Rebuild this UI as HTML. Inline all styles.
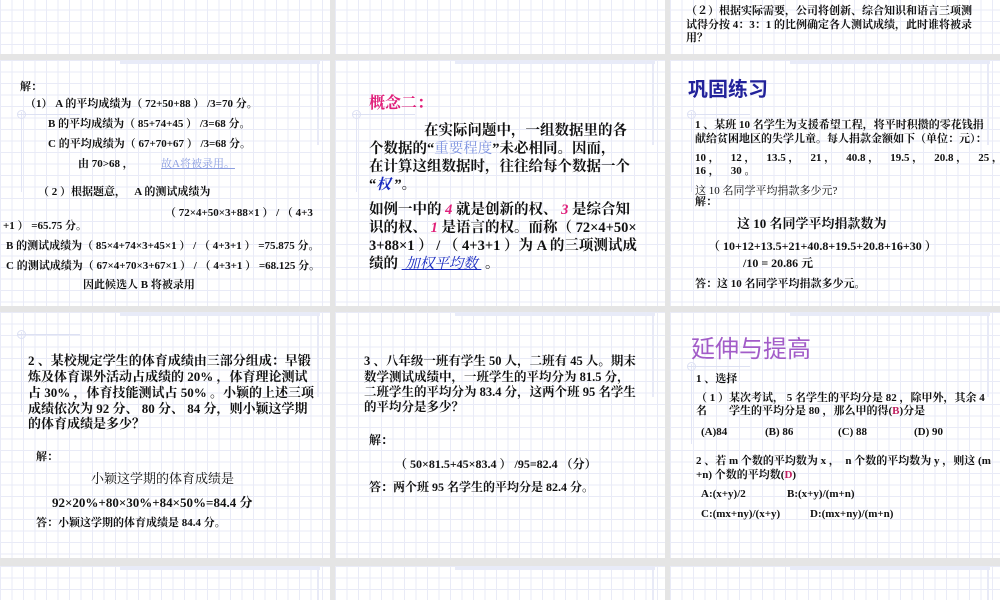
<!DOCTYPE html>
<html style="width:1000px;height:600px;overflow:hidden;background:#e5e5e5"><head><meta charset="utf-8"><style>
*{margin:0;padding:0;box-sizing:border-box}
body{width:1000px;height:600px;background:#e5e5e5;position:relative;overflow:hidden;font-family:"Liberation Serif","Noto Serif CJK SC",serif;font-weight:bold;color:#111}
.s{position:absolute;width:330px;height:246px;background-color:#fff;
background-image:linear-gradient(#e9ebf7 1px,transparent 1px),linear-gradient(90deg,#e9ebf7 1px,transparent 1px);background-size:11.5px 11.5px;overflow:hidden}
.s.b{height:34px}
.s.a{height:54px;background-position:0 -2px}
.s .band{position:absolute;left:120px;top:0;width:200px;height:4px;background:#e8ebf8}
.s .vl{position:absolute;left:317px;top:0;width:2px;height:85px;background:#e8eaf7}
.s.b .vl{height:34px}
.s .dl{position:absolute;left:21px;top:52px;width:1px;height:80px;background:#e3e6f6}
.s .hl{position:absolute;left:18px;top:54px;width:62px;height:1px;background:#dde1f3}
.s .c{position:absolute;left:17px;top:50px;width:9px;height:9px;border:1px solid #dce0f3;border-radius:50%}
.t{position:absolute;white-space:nowrap;font-size:11px;line-height:13px}
.m{font-size:14.5px;line-height:18px}
.n{font-size:13px;line-height:16px}
.k{font-size:12.5px;line-height:15px}
</style></head><body>
<div class="s a" style="left:0;top:0"></div>
<div class="s a" style="left:335px;top:0"></div>
<div class="s a" style="left:670px;top:0"></div>
<div class="s" style="left:0;top:60px"><div class="band"></div><div class="vl"></div><div class="dl"></div><div class="hl"></div><div class="c"></div></div>
<div class="s" style="left:335px;top:60px"><div class="band"></div><div class="vl"></div><div class="dl"></div><div class="hl"></div><div class="c"></div></div>
<div class="s" style="left:670px;top:60px"><div class="band"></div><div class="vl"></div><div class="dl"></div><div class="hl"></div><div class="c"></div></div>
<div class="s" style="left:0;top:312px"><div class="band"></div><div class="vl"></div><div class="dl" style="top:20px"></div><div class="hl" style="top:22px"></div><div class="c" style="top:18px"></div></div>
<div class="s" style="left:335px;top:312px"><div class="band"></div><div class="vl"></div></div>
<div class="s" style="left:670px;top:312px"><div class="band"></div><div class="vl"></div><div class="dl"></div><div class="hl"></div><div class="c"></div></div>
<div class="s b" style="left:0;top:566px"><div class="band"></div><div class="vl"></div></div>
<div class="s b" style="left:335px;top:566px"><div class="band"></div><div class="vl"></div></div>
<div class="s b" style="left:670px;top:566px"><div class="band"></div><div class="vl"></div></div>

<div class="t" style="left:686px;top:5px">（２）根据实际需要，公司将创新、综合知识和语言三项测</div>
<div class="t" style="left:686px;top:19px">试得分按 4：3：1 的比例确定各人测试成绩，此时谁将被录</div>
<div class="t" style="left:686px;top:32px">用？</div>

<div class="t" style="left:20px;top:81px">解：</div>
<div class="t" style="left:25px;top:98px">（1） A 的平均成绩为（ 72+50+88 ） /3=70 分。</div>
<div class="t" style="left:48px;top:118px">B 的平均成绩为（ 85+74+45 ） /3=68 分。</div>
<div class="t" style="left:48px;top:138px">C 的平均成绩为（ 67+70+67 ） /3=68 分。</div>
<div class="t" style="left:78px;top:158px">由 70>68 ，</div>
<div class="t" style="left:161px;top:158px;color:#8c9ee0;font-weight:normal;text-decoration:underline">故A将被录用。</div>
<div class="t" style="left:38px;top:186px">（ 2 ）根据题意，&nbsp;&nbsp; A 的测试成绩为</div>
<div class="t" style="left:165px;top:207px">（ 72×4+50×3+88×1 ） / （ 4+3</div>
<div class="t" style="left:3px;top:220px">+1 ） =65.75 分。</div>
<div class="t" style="left:6px;top:240px">B 的测试成绩为（ 85×4+74×3+45×1 ） / （ 4+3+1 ） =75.875 分。</div>
<div class="t" style="left:6px;top:260px">C 的测试成绩为（ 67×4+70×3+67×1 ） / （ 4+3+1 ） =68.125 分。</div>
<div class="t" style="left:83px;top:279px">因此候选人 B 将被录用</div>

<div class="t" style="left:369px;top:94px;font-size:16px;line-height:20px;color:#e0207a">概念二：</div>
<div class="t m" style="left:424px;top:122px">在实际问题中，一组数据里的各</div>
<div class="t m" style="left:369px;top:140px">个数据的“<span style="color:#7f94e0;font-weight:normal">重要程度</span>”未必相同。因而，</div>
<div class="t m" style="left:369px;top:158px">在计算这组数据时，往往给每个数据一个</div>
<div class="t m" style="left:369px;top:176px">“<i style="color:#1a2cc0">权</i> ”。</div>
<div class="t m" style="left:369px;top:201px">如例一中的 <i style="color:#e0207a">4</i> 就是创新的权、 <i style="color:#e0207a">3</i> 是综合知</div>
<div class="t m" style="left:369px;top:219px">识的权、 <i style="color:#e0207a">1</i> 是语言的权。而称（ 72×4+50×</div>
<div class="t m" style="left:369px;top:237px">3+88×1 ） / （ 4+3+1 ）为 A 的三项测试成</div>
<div class="t m" style="left:369px;top:255px">绩的 <i style="color:#1a2cc0;text-decoration:underline;font-weight:normal">&nbsp;加权平均数&nbsp;</i> 。</div>

<div class="t" style="left:688px;top:77px;font-size:20px;line-height:26px;color:#22229a;font-family:'Liberation Sans','Noto Sans CJK SC',sans-serif">巩固练习</div>
<div class="t" style="left:695px;top:119px">1 、某班 10 名学生为支援希望工程，将平时积攒的零花钱捐</div>
<div class="t" style="left:695px;top:133px">献给贫困地区的失学儿童。每人捐款金额如下（单位：元）：</div>
<div class="t" style="left:695px;top:152px">10 ，&nbsp;&nbsp;&nbsp; 12 ，&nbsp;&nbsp;&nbsp; 13.5 ，&nbsp;&nbsp;&nbsp; 21 ，&nbsp;&nbsp;&nbsp; 40.8 ，&nbsp;&nbsp;&nbsp; 19.5 ，&nbsp;&nbsp;&nbsp; 20.8 ，&nbsp;&nbsp;&nbsp; 25 ，</div>
<div class="t" style="left:695px;top:165px">16 ，&nbsp;&nbsp;&nbsp; 30 。</div>
<div class="t" style="left:695px;top:185px;font-weight:normal">这 10 名同学平均捐款多少元?</div>
<div class="t" style="left:695px;top:196px">解：</div>
<div class="t n" style="left:737px;top:216px">这 10 名同学平均捐款数为</div>
<div class="t" style="left:708px;top:240px;font-size:12px">（ 10+12+13.5+21+40.8+19.5+20.8+16+30 ）</div>
<div class="t" style="left:743px;top:257px;font-size:12px">/10 = 20.86 元</div>
<div class="t" style="left:695px;top:278px">答：这 10 名同学平均捐款多少元。</div>

<div class="t n" style="left:28px;top:353px">2 、某校规定学生的体育成绩由三部分组成：早锻</div>
<div class="t n" style="left:28px;top:369px">炼及体育课外活动占成绩的 20% ，体育理论测试</div>
<div class="t n" style="left:28px;top:385px">占 30% ，体育技能测试占 50% 。小颖的上述三项</div>
<div class="t n" style="left:28px;top:401px">成绩依次为 92 分、 80 分、 84 分，则小颖这学期</div>
<div class="t n" style="left:28px;top:416px">的体育成绩是多少？</div>
<div class="t" style="left:36px;top:451px">解：</div>
<div class="t n" style="left:91px;top:471px;font-weight:normal">小颖这学期的体育成绩是</div>
<div class="t n" style="left:52px;top:495px">92×20%+80×30%+84×50%=84.4 分</div>
<div class="t" style="left:36px;top:517px">答：小颖这学期的体育成绩是 84.4 分。</div>

<div class="t k" style="left:364px;top:354px">3 、八年级一班有学生 50 人，二班有 45 人。期末</div>
<div class="t k" style="left:364px;top:370px">数学测试成绩中，一班学生的平均分为 81.5 分，</div>
<div class="t k" style="left:364px;top:385px">二班学生的平均分为 83.4 分，这两个班 95 名学生</div>
<div class="t k" style="left:364px;top:400px">的平均分是多少？</div>
<div class="t" style="left:369px;top:434px;font-size:12px">解：</div>
<div class="t" style="left:395px;top:458px;font-size:12px">（ 50×81.5+45×83.4 ） /95=82.4 （分）</div>
<div class="t" style="left:369px;top:481px;font-size:12px">答：两个班 95 名学生的平均分是 82.4 分。</div>

<div class="t" style="left:691px;top:335px;font-size:24px;line-height:30px;color:#a25cc8;font-weight:normal;font-family:'Liberation Sans','Noto Sans CJK SC',sans-serif">延伸与提高</div>
<div class="t" style="left:696px;top:373px">1 、选择</div>
<div class="t" style="left:696px;top:392px">（ 1 ）某次考试， 5 名学生的平均分是 82 ，除甲外，其余 4</div>
<div class="t" style="left:696px;top:405px">名 &nbsp;&nbsp;&nbsp;&nbsp;&nbsp;&nbsp; 学生的平均分是 80 ，那么甲的得(<span style="color:#c02060">B</span>)分是</div>
<div class="t" style="left:701px;top:426px">(A)84</div>
<div class="t" style="left:765px;top:426px">(B) 86</div>
<div class="t" style="left:838px;top:426px">(C) 88</div>
<div class="t" style="left:914px;top:426px">(D) 90</div>
<div class="t" style="left:696px;top:455px">2 、若 m 个数的平均数为 x ，&nbsp; n 个数的平均数为 y ，则这 (m</div>
<div class="t" style="left:696px;top:469px">+n) 个数的平均数(<span style="color:#c02060">D</span>)</div>
<div class="t" style="left:701px;top:488px">A:(x+y)/2</div>
<div class="t" style="left:787px;top:488px">B:(x+y)/(m+n)</div>
<div class="t" style="left:701px;top:508px">C:(mx+ny)/(x+y)</div>
<div class="t" style="left:810px;top:508px">D:(mx+ny)/(m+n)</div>
</body></html>
